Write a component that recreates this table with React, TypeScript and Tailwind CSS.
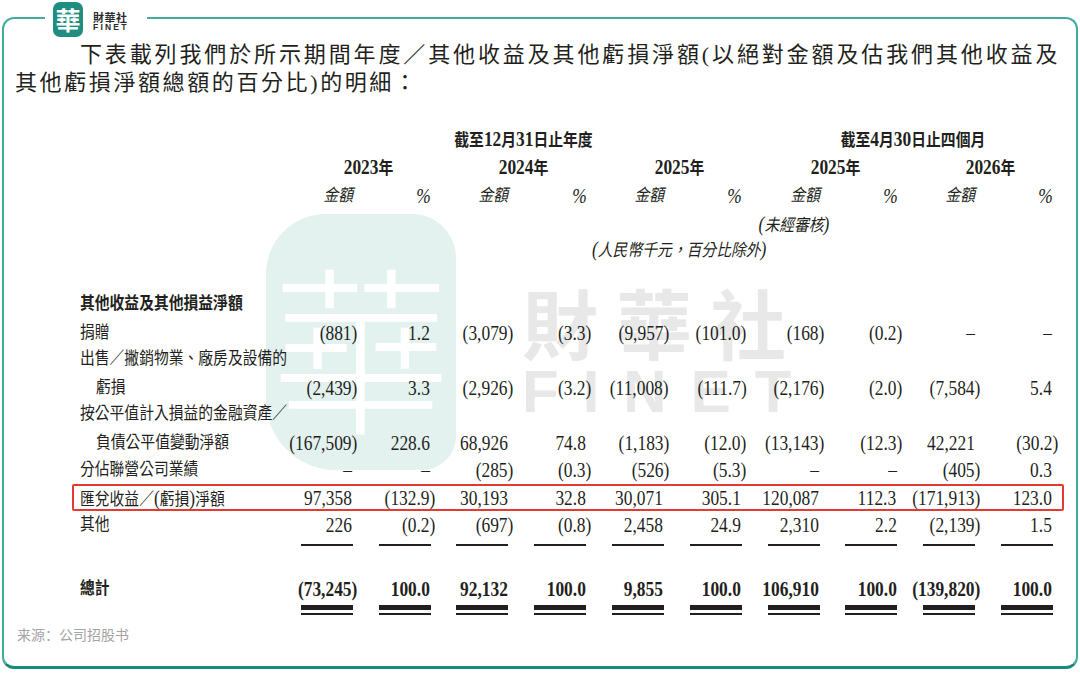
import React from "react";

const GRID = "grid w-[978px] grid-cols-[200px_repeat(10,77.8px)]";

function Mixed({ text }: { text: string }) {
  const parts = text.split(/([\x20-\x7E–%]+)/).filter((p) => p.length > 0);
  return (
    <>
      {parts.map((p, i) =>
        /^[\x20-\x7E–%]+$/.test(p) ? (
          <span key={i} className="text-[20px]">
            {p}
          </span>
        ) : (
          <span key={i}>{p}</span>
        )
      )}
    </>
  );
}

function T({
  text,
  align = "left",
  className = "",
}: {
  text: string;
  align?: "left" | "right" | "center";
  className?: string;
}) {
  const origin =
    align === "right" ? "origin-right" : align === "center" ? "origin-center" : "origin-left";
  return (
    <span className={`inline-block whitespace-nowrap text-[17px] scale-x-[0.87] ${origin} ${className}`}>
      <Mixed text={text} />
    </span>
  );
}

function Num({ v, bold = false }: { v: string; bold?: boolean }) {
  const hang = v.endsWith(")");
  return (
    <div className="flex h-full items-center justify-end">
      <span
        className={`inline-block origin-right scale-x-[0.87] whitespace-nowrap text-[20px] ${
          bold ? "font-bold" : ""
        }`}
      >
        {v}
        {!hang && <span className="invisible">)</span>}
      </span>
    </div>
  );
}

type Row = { label: string; indent?: boolean; bold?: boolean; nums?: string[]; box?: boolean };

const rows: Row[] = [
  { label: "其他收益及其他損益淨額", bold: true },
  { label: "捐贈", nums: ["(881)", "1.2", "(3,079)", "(3.3)", "(9,957)", "(101.0)", "(168)", "(0.2)", "–", "–"] },
  { label: "出售／撇銷物業、廠房及設備的" },
  {
    label: "虧損",
    indent: true,
    nums: ["(2,439)", "3.3", "(2,926)", "(3.2)", "(11,008)", "(111.7)", "(2,176)", "(2.0)", "(7,584)", "5.4"],
  },
  { label: "按公平值計入損益的金融資產／" },
  {
    label: "負債公平值變動淨額",
    indent: true,
    nums: ["(167,509)", "228.6", "68,926", "74.8", "(1,183)", "(12.0)", "(13,143)", "(12.3)", "42,221", "(30.2)"],
  },
  { label: "分佔聯營公司業績", nums: ["–", "–", "(285)", "(0.3)", "(526)", "(5.3)", "–", "–", "(405)", "0.3"] },
  {
    label: "匯兌收益／(虧損)淨額",
    box: true,
    nums: ["97,358", "(132.9)", "30,193", "32.8", "30,071", "305.1", "120,087", "112.3", "(171,913)", "123.0"],
  },
  { label: "其他", nums: ["226", "(0.2)", "(697)", "(0.8)", "2,458", "24.9", "2,310", "2.2", "(2,139)", "1.5"] },
];

const total = ["(73,245)", "100.0", "92,132", "100.0", "9,855", "100.0", "106,910", "100.0", "(139,820)", "100.0"];

const ten = Array.from({ length: 10 }, (_, i) => i);

function BodyRow({ r }: { r: Row }) {
  return (
    <div className={`${GRID} relative h-[27.5px]`}>
      {r.box && (
        <div className="absolute bottom-[-1px] left-[-8px] right-[-6px] top-[1px] rounded-[2px] border-2 border-[#e53a31]" />
      )}
      <div className={`flex h-full items-center ${r.indent ? "pl-[16px]" : ""} ${r.bold ? "font-bold" : ""}`}>
        <T text={r.label} />
      </div>
      {r.nums ? ten.map((i) => <Num key={i} v={r.nums![i]} />) : null}
    </div>
  );
}

export default function App() {
  return (
    <div className="relative h-[688px] w-[1080px] overflow-hidden bg-white font-['Liberation_Serif','Noto_Sans_CJK_TC',serif] text-[#231f20]">
      {/* watermark: 華 seal */}
      <div
        aria-hidden="true"
        className="absolute left-[266px] top-[214px] flex h-[256px] w-[190px] items-center justify-center overflow-hidden rounded-[60px_44px_34px_70px] bg-[#e3f1ef]"
      >
        <span className="font-['Noto_Sans_CJK_TC',sans-serif] text-[180px] font-light leading-none text-white">華</span>
      </div>
      {/* watermark: 財華社 FINET */}
      <div aria-hidden="true" className="absolute left-[522px] top-[276px] flex flex-col items-start">
        <span className="font-['Noto_Sans_CJK_TC',sans-serif] text-[76px] font-bold leading-[90px] tracking-[18px] text-[#e8e8e8]">
          財華社
        </span>
        <span className="mt-[-4px] font-['Liberation_Sans',sans-serif] text-[60px] font-bold leading-[60px] tracking-[24px] text-[#e8e8e8]">
          FINET
        </span>
      </div>

      {/* frame */}
      <div className="relative ml-[2px] mt-[17px] h-[652px] w-[1076px] rounded-[12px] border-2 border-b-[3px] border-[#45ab9f] border-b-[#188b7d]">
        {/* logo */}
        <div className="absolute left-[41px] top-[-19px] flex h-[38px] w-[102px] items-start bg-white pl-[8px]">
          <div className="mt-[2px] flex h-[35px] w-[30px] items-center justify-center rounded-[7px] bg-[#1f8e80]">
            <span className="font-['Noto_Sans_CJK_TC',serif] text-[25px] font-bold leading-none text-white">華</span>
          </div>
          <div className="ml-[10px] mt-[11px] flex flex-col">
            <span className="font-['Noto_Sans_CJK_TC',sans-serif] text-[11px] font-bold leading-[12px] tracking-[0.5px] text-[#2a2a2a]">
              財華社
            </span>
            <span className="font-['Liberation_Sans',sans-serif] text-[8.5px] font-bold leading-[9px] tracking-[2.2px] text-[#2a2a2a]">
              FINET
            </span>
          </div>
        </div>

        {/* paragraph */}
        <div className="mt-[22px] pl-[11px] pr-[16px] text-[22px] leading-[28px] tracking-[2.6px]">
          <div className="pl-[65px] [text-align-last:justify]">
            下表載列我們於所示期間年度／其他收益及其他虧損淨額(以絕對金額及估我們其他收益及
          </div>
          <div>其他虧損淨額總額的百分比)的明細：</div>
        </div>

        {/* table */}
        <div className="mt-[27px] pl-[76px]">
          {/* header */}
          <div className={`${GRID} h-[28px] items-center font-bold`}>
            <div />
            <div className="col-span-6 pl-[26px] pr-[5px] text-center">
              <T text="截至12月31日止年度" align="center" />
            </div>
            <div className="col-span-4 pl-[26px] pr-[5px] text-center">
              <T text="截至4月30日止四個月" align="center" />
            </div>
          </div>
          <div className={`${GRID} h-[29px] items-center font-bold`}>
            <div />
            {["2023年", "2024年", "2025年", "2025年", "2026年"].map((y, i) => (
              <div key={i} className="col-span-2 pl-[26px] pr-[5px] text-center">
                <T text={y} align="center" />
              </div>
            ))}
          </div>
          <div className={`${GRID} h-[28px] items-center italic`}>
            <div />
            {ten.map((i) => (
              <div key={i} className="pr-[5px] text-right">
                <T text={i % 2 === 0 ? "金額" : "%"} align="right" />
              </div>
            ))}
          </div>
          <div className={`${GRID} h-[25px] items-center italic`}>
            <div className="col-span-7" />
            <div className="mr-[-5px] text-right">
              <T text="(未經審核)" align="right" />
            </div>
          </div>
          <div className={`${GRID} h-[28px] items-center italic`}>
            <div />
            <div className="col-span-10 pl-[26px] pr-[5px] text-center">
              <T text="(人民幣千元，百分比除外)" align="center" />
            </div>
          </div>

          {/* body */}
          <div className="mt-[28px]">
            {rows.map((r, i) => (
              <BodyRow key={i} r={r} />
            ))}
          </div>
          <div className={`${GRID} h-[8px]`}>
            <div />
            {ten.map((i) => (
              <div key={i} className="flex items-end justify-end pr-[5px]">
                <div className="h-[1.5px] w-[52px] bg-[#231f20]" />
              </div>
            ))}
          </div>

          {/* total */}
          <div className={`${GRID} mt-[28px] h-[28px]`}>
            <div className="flex h-full items-center font-bold">
              <T text="總計" />
            </div>
            {ten.map((i) => (
              <Num key={i} v={total[i]} bold />
            ))}
          </div>
          <div className={`${GRID} mt-[3px]`}>
            <div />
            {ten.map((i) => (
              <div key={i} className="flex justify-end pr-[5px]">
                <div className="w-[52px]">
                  <div className="h-[5px] bg-[#231f20]" />
                  <div className="mt-[3px] h-[2px] bg-[#231f20]" />
                </div>
              </div>
            ))}
          </div>
        </div>

        {/* source */}
        <div className="mt-[9px] pl-[13px] font-['Noto_Sans_CJK_SC',sans-serif] text-[14px] leading-[20px] text-[#a3a3a3]">
          来源：公司招股书
        </div>
      </div>
    </div>
  );
}
